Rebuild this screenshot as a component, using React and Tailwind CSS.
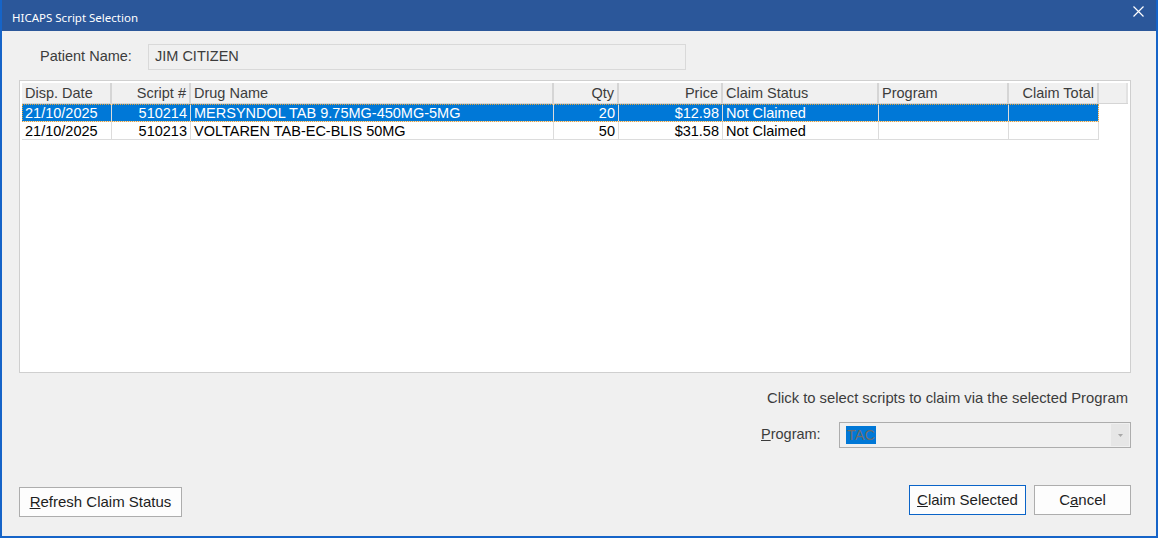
import React from "react";

const columns = [
  { key: "date", label: "Disp. Date", w: "w-[90px]", align: "text-left" },
  { key: "script", label: "Script #", w: "w-[79px]", align: "text-right" },
  { key: "drug", label: "Drug Name", w: "w-[363px]", align: "text-left" },
  { key: "qty", label: "Qty", w: "w-[65px]", align: "text-right" },
  { key: "price", label: "Price", w: "w-[104px]", align: "text-right" },
  { key: "status", label: "Claim Status", w: "w-[156px]", align: "text-left" },
  { key: "program", label: "Program", w: "w-[130px]", align: "text-left" },
  { key: "total", label: "Claim Total", w: "w-[90px]", align: "text-right" },
];

const rows = [
  {
    date: "21/10/2025",
    script: "510214",
    drug: "MERSYNDOL TAB 9.75MG-450MG-5MG",
    qty: "20",
    price: "$12.98",
    status: "Not Claimed",
    program: "",
    total: "",
    selected: true,
  },
  {
    date: "21/10/2025",
    script: "510213",
    drug: "VOLTAREN TAB-EC-BLIS 50MG",
    qty: "50",
    price: "$31.58",
    status: "Not Claimed",
    program: "",
    total: "",
  },
];

const Btn = ({ children, className = "", focused = false }) => (
  <button
    className={`h-[30px] bg-[#fdfdfd] border text-[15px] text-[#1e1e1e] ${
      focused ? "border-[#0a64c8]" : "border-[#adadad]"
    } ${className}`}
  >
    {children}
  </button>
);

export default function App() {
  return (
    <div
      className="w-[1158px] h-[538px] flex flex-col bg-[#f0f0f0] border-x-2 border-b-2 border-[#1664c8] overflow-hidden"
      style={{ fontFamily: '"Liberation Sans", Arial, sans-serif' }}
    >
      {/* Title bar */}
      <div className="h-[31px] shrink-0 bg-[#2b579a] flex items-center justify-between -mx-[2px] pl-[12px] pr-[14px]">
        <span
          className="text-white text-[11.5px] pt-[5px]"
          style={{ fontFamily: '"Noto Sans", "Open Sans", sans-serif' }}
        >
          HICAPS Script Selection
        </span>
        <svg className="w-[11px] h-[11px] mb-[8px]" viewBox="0 0 11 11" fill="none" stroke="white" strokeWidth="1.2">
          <path d="M0.5 0.5l10 10M10.5 0.5l-10 10" />
        </svg>
      </div>

      <div className="flex-1 flex flex-col pl-[17px] pr-[25px]">
        {/* Patient */}
        <div className="flex items-center mt-[13px] h-[26px]">
          <span className="ml-[21px] w-[108px] text-[14.5px] text-[#3c3c3c]">Patient Name:</span>
          <div className="w-[538px] h-[26px] border border-[#d9d9d9] bg-[#f0f0f0] flex items-center pl-[6px] text-[14.5px] text-[#3c3c3c]">
            JIM CITIZEN
          </div>
        </div>

        {/* Grid */}
        <div className="mt-[10px] h-[293px] border border-[#cfcfcf] bg-white p-[2px]">
          <div className="flex h-[21px] bg-[#f0f0f0] border-b border-[#d5d5d5]">
            {columns.map((c) => (
              <div
                key={c.key}
                className={`${c.w} shrink-0 border-r-2 border-[#d5d5d5] px-[3px] pt-[1px] ${c.align} text-[14.5px] leading-[19px] text-[#3c3c3c] whitespace-nowrap`}
              >
                {c.label}
              </div>
            ))}
            <div className="w-[29px] border-r-2 border-[#e2e2e2]" />
            <div className="flex-1 bg-white" />
          </div>
          {rows.map((r, i) => (
            <div
              key={i}
              className={`flex w-[1077px] h-[18px] ${
                r.selected ? "bg-[#0078d7] text-white outline outline-1 outline-dotted outline-[#e3a23a] -outline-offset-1" : "text-black"
              }`}
            >
              {columns.map((c) => (
                <div
                  key={c.key}
                  className={`${c.w} shrink-0 border-r border-b border-[#dcdcdc] px-[3px] pt-[1px] ${c.align} text-[14.5px] leading-[16px] whitespace-nowrap overflow-hidden`}
                >
                  {r[c.key]}
                </div>
              ))}
            </div>
          ))}
        </div>

        {/* Program selection */}
        <div className="mt-[17px] text-right text-[14.8px] leading-[16px] text-[#3c3c3c] pr-[3px]">
          Click to select scripts to claim via the selected Program
        </div>
        <div className="flex items-center justify-end mt-[16px] h-[26px]">
          <span className="text-[14.5px] text-[#3c3c3c] w-[78px]">
            <span className="underline">P</span>rogram:
          </span>
          <div className="w-[292px] h-[26px] border border-[#adadad] bg-[#f0f0f0] flex items-center">
            <div className="flex-1 pl-[6px] flex items-center">
              <span className="bg-[#0078d7] text-[#6d6d6d] text-[14.5px] leading-[18px] px-[1px]">TAC</span>
            </div>
            <div className="w-[18px] h-[22px] mr-[1px] bg-[#e6e6e6] flex items-center justify-center">
              <svg width="5" height="3" viewBox="0 0 5 3">
                <path d="M0 0h5L2.5 3z" fill="#a8a8a8" />
              </svg>
            </div>
          </div>
        </div>

        {/* Buttons */}
        <div className="flex items-start justify-between mt-[37px]">
          <Btn className="w-[163px] mt-[2px]">
            <span className="underline">R</span>efresh Claim Status
          </Btn>
          <div className="flex gap-[8px]">
            <Btn focused className="w-[117px]">
              <span className="underline">C</span>laim Selected
            </Btn>
            <Btn className="w-[97px]">
              C<span className="underline">a</span>ncel
            </Btn>
          </div>
        </div>
      </div>
    </div>
  );
}
